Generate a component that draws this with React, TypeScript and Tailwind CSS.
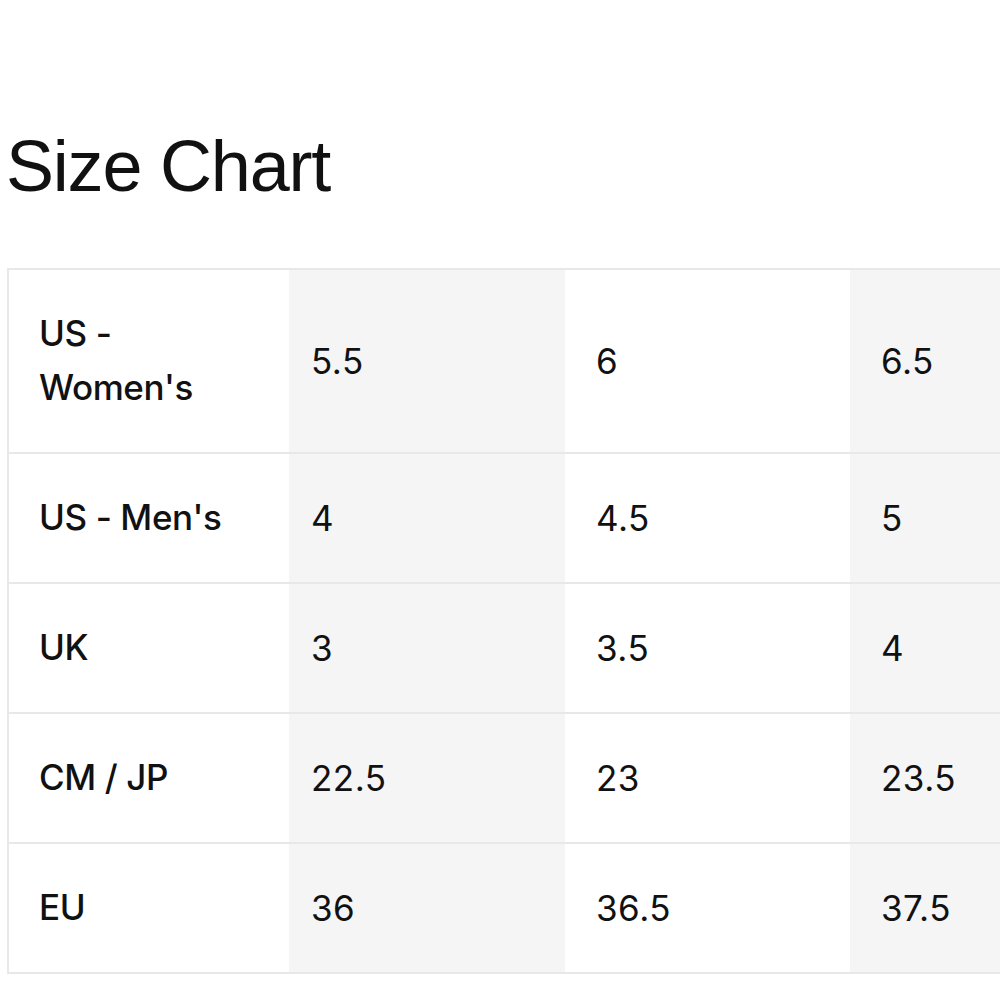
import React from "react";

const rows: { label: React.ReactNode; values: string[] }[] = [
  { label: (<>US -<br />Women's</>), values: ["5.5", "6", "6.5"] },
  { label: "US - Men's", values: ["4", "4.5", "5"] },
  { label: "UK", values: ["3", "3.5", "4"] },
  { label: "CM / JP", values: ["22.5", "23", "23.5"] },
  { label: "EU", values: ["36", "36.5", "37.5"] },
];

export default function App() {
  return (
    <div
      className="w-[1000px] h-[1000px] overflow-hidden bg-white text-[#111111]"
      style={{ fontFamily: "Inter, 'Liberation Sans', sans-serif" }}
    >
      <h1
        className="pt-[123px] pl-[6px] text-[72px] leading-[86px] font-normal tracking-[-1.2px]"
        style={{ fontFamily: "'Liberation Sans', Arial, sans-serif" }}
      >
        Size Chart
      </h1>
      <table className="mt-[59px] ml-[7px] w-[1130px] table-fixed border-collapse">
        <colgroup>
          <col className="w-[281px]" />
          <col className="w-[276px]" />
          <col className="w-[285px]" />
          <col className="w-[288px]" />
        </colgroup>
        <tbody>
          {rows.map((r, i) => (
            <tr key={i} className="border-2 border-[#e8e8e8]">
              <td className="align-middle pl-[30px] pr-[20px] pt-[36px] pb-[38px] text-[35px] leading-[54px] font-medium tracking-[-0.4px]">
                {r.label}
              </td>
              <td className="align-middle bg-[#f5f5f5] pl-[22px] text-[35px] leading-[54px] tracking-[0.5px]">
                {r.values[0]}
              </td>
              <td className="align-middle bg-white pl-[31px] text-[35px] leading-[54px] tracking-[0.5px]">
                {r.values[1]}
              </td>
              <td className="align-middle bg-[#f5f5f5] pl-[31px] text-[35px] leading-[54px] tracking-[0.5px]">
                {r.values[2]}
              </td>
            </tr>
          ))}
        </tbody>
      </table>
    </div>
  );
}
